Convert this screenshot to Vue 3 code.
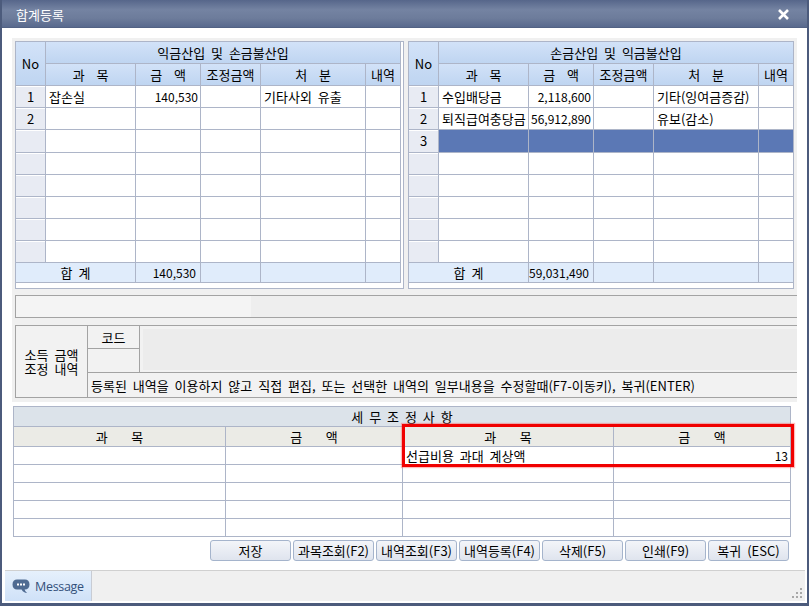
<template>
  <div class="window">
    <div class="titlebar">
      <span class="title-text">합계등록</span>
      <svg class="close" width="11" height="11" viewBox="0 0 11 11">
        <path d="M1 1L10 10M10 1L1 10" stroke="#fff" stroke-width="2.6" fill="none" />
      </svg>
    </div>

    <div class="panel">
      <div class="grids">
        <div v-for="(grid, g) in grids" :key="g" class="frame" :class="g === 0 ? 'frame-left' : 'frame-right'">
          <table class="grid">
            <colgroup>
              <col class="c-no" />
              <col class="c-name" />
              <col class="c-amt" />
              <col class="c-adj" />
              <col class="c-act" />
              <col />
            </colgroup>
            <thead>
              <tr>
                <th rowspan="2" class="no-head">No</th>
                <th colspan="5">{{ grid.title }}</th>
              </tr>
              <tr>
                <th v-for="h in gridHeads" :key="h">{{ h }}</th>
              </tr>
            </thead>
            <tbody>
              <tr v-for="(row, i) in grid.rows" :key="i" :class="{ selected: row.selected, tall: i === 2 }">
                <td class="row-no">{{ row.no }}</td>
                <td class="txt">{{ row.name }}</td>
                <td class="amt">{{ row.amount }}</td>
                <td></td>
                <td class="txt">{{ row.action }}</td>
                <td></td>
              </tr>
              <tr class="sum">
                <td colspan="2" class="sum-label">합 계</td>
                <td class="amt sum-amt">{{ grid.total }}</td>
                <td></td>
                <td></td>
                <td></td>
              </tr>
            </tbody>
          </table>
        </div>
      </div>

      <div class="status-bar"><div class="status-left"></div></div>

      <div class="adjust">
        <div class="adjust-label">소득 금액<br />조정 내역</div>
        <div class="code-head">코드</div>
        <div class="code-box-wrap"><div class="code-box"></div></div>
        <div class="code-empty"></div>
        <div class="note">등록된 내역을 이용하지 않고 직접 편집, 또는 선택한 내역의 일부내용을 수정할때(F7-이동키), 복귀(ENTER)</div>
      </div>
    </div>

    <div class="tax">
      <table class="tax-table">
        <colgroup>
          <col class="t-a" />
          <col class="t-b" />
          <col class="t-c" />
          <col />
        </colgroup>
        <thead>
          <tr>
            <th colspan="4" class="tax-title">세 무 조 정 사 항</th>
          </tr>
          <tr>
            <th v-for="(h, i) in taxHeads" :key="i">{{ h }}</th>
          </tr>
        </thead>
        <tbody>
          <tr v-for="(row, i) in taxRows" :key="i">
            <td></td>
            <td></td>
            <td class="tax-name">{{ row.name }}</td>
            <td class="tax-amt">{{ row.amount }}</td>
          </tr>
        </tbody>
      </table>
      <div class="highlight"></div>
    </div>

    <div class="buttons">
      <button v-for="b in buttons" :key="b" class="btn">{{ b }}</button>
    </div>

    <div class="footer">
      <div class="msg-tab">
        <svg width="18" height="15" viewBox="0 0 18 15">
          <path d="M5 0.5H13C15.6 0.5 17.5 2.2 17.5 5.5C17.5 8.8 15.6 10.5 13 10.5H12.6C13 12 14 13.2 15.2 14C12.8 14 10.6 12.6 9.6 10.5H5C2.4 10.5 0.5 8.8 0.5 5.5C0.5 2.2 2.4 0.5 5 0.5Z" fill="#4f6b92" />
          <rect x="5" y="4.5" width="2" height="2" fill="#fff" />
          <rect x="8" y="4.5" width="2" height="2" fill="#fff" />
          <rect x="11" y="4.5" width="2" height="2" fill="#fff" />
        </svg>
        <span class="msg-text">Message</span>
      </div>
      <svg class="grip" width="12" height="11" viewBox="0 0 12 11">
        <rect x="9" y="0" width="2" height="2" fill="#a8a8a8" />
        <rect x="5" y="4" width="2" height="2" fill="#a8a8a8" />
        <rect x="9" y="4" width="2" height="2" fill="#a8a8a8" />
        <rect x="1" y="8" width="2" height="2" fill="#a8a8a8" />
        <rect x="5" y="8" width="2" height="2" fill="#a8a8a8" />
        <rect x="9" y="8" width="2" height="2" fill="#a8a8a8" />
      </svg>
    </div>
  </div>
</template>

<script setup>
const blank = { no: '', name: '', amount: '', action: '' }

const gridHeads = ['과  목', '금  액', '조정금액', '처  분', '내역']
const taxHeads = ['과    목', '금    액', '과    목', '금    액']

const grids = [
  {
    title: '익금산입 및 손금불산입',
    total: '140,530',
    rows: [
      { no: '1', name: '잡손실', amount: '140,530', action: '기타사외 유출' },
      { no: '2', name: '', amount: '', action: '' },
      blank, blank, blank, blank, blank, blank
    ]
  },
  {
    title: '손금산입 및 익금불산입',
    total: '59,031,490',
    rows: [
      { no: '1', name: '수입배당금', amount: '2,118,600', action: '기타(잉여금증감)' },
      { no: '2', name: '퇴직급여충당금', amount: '56,912,890', action: '유보(감소)' },
      { no: '3', name: '', amount: '', action: '', selected: true },
      blank, blank, blank, blank, blank
    ]
  }
]

const taxRows = [
  { name: '선급비용 과대 계상액', amount: '13' },
  { name: '', amount: '' },
  { name: '', amount: '' },
  { name: '', amount: '' },
  { name: '', amount: '' }
]

const buttons = ['저장', '과목조회(F2)', '내역조회(F3)', '내역등록(F4)', '삭제(F5)', '인쇄(F9)', '복귀 (ESC)']
</script>

<style scoped>
.window {
  width: 809px;
  height: 606px;
  box-sizing: border-box;
  border-left: 2px solid #4c5b7c;
  border-right: 2px solid #4c5b7c;
  border-bottom: 3px solid #4c5b7c;
  background: #fff;
  display: flex;
  flex-direction: column;
  font-family: "Noto Sans CJK KR", sans-serif;
  font-size: 13px;
  color: #000;
  word-spacing: 3px;
  overflow: hidden;
}

.titlebar {
  height: 28px;
  flex: none;
  box-sizing: border-box;
  display: flex;
  align-items: center;
  justify-content: space-between;
  padding: 0 18px 0 14px;
  background: linear-gradient(#56668a 0, #7483a2 35%, #6d7c9b 65%, #596a8e 96%, #4c5b7c 100%);
}

.title-text {
  color: #fff;
}

.panel {
  flex: none;
  width: 785px;
  height: 364px;
  box-sizing: border-box;
  margin: 10px 0 0 10px;
  padding: 3px 0 0 3px;
  background: #f0f0f0;
}

.grids {
  display: flex;
  gap: 4px;
}

.frame {
  height: 248px;
  box-sizing: border-box;
  border: 1px solid #adb5c8;
  background: #fff;
}

.frame-left {
  width: 389px;
}

.frame-right {
  width: 386px;
}

.frame-left .grid {
  width: 385px;
}

.frame-right .grid {
  width: 384px;
}

.frame-right .grid td:last-child,
.frame-right .grid th:last-child {
  border-right: none;
}

.grid,
.tax-table {
  table-layout: fixed;
  border-collapse: separate;
  border-spacing: 0;
}

.c-no { width: 30px; }
.c-name { width: 90px; }
.c-amt { width: 65px; }
.c-adj { width: 60px; }
.c-act { width: 105px; }

.grid th,
.grid td {
  box-sizing: border-box;
  height: 22px;
  padding: 0;
  border-right: 1px solid #adb5c8;
  border-bottom: 1px solid #adb5c8;
  font-weight: 400;
  line-height: 16px;
  white-space: pre;
}

.grid th {
  background: linear-gradient(#d2e2f8, #bfd5f1);
  text-align: center;
}

.row-no {
  background: #e8ebf3;
  box-shadow: inset 0 1px 0 #fff;
  text-align: center;
}

.grid .txt {
  padding-left: 3px;
}

.grid .amt {
  padding-right: 2px;
  text-align: right;
  font-size: 12px;
  word-spacing: 0;
}

.grid .tall td {
  height: 23px;
}

.grid .selected td:not(.row-no) {
  background: #5b78b5;
}

.grid .sum td {
  height: 20px;
  background: #e0ecfb;
}

.sum-label {
  text-align: center;
}

.grid .sum-amt {
  padding-right: 4px;
}

.status-bar {
  height: 23px;
  box-sizing: border-box;
  margin-top: 6px;
  border: 1px solid #a3a3a3;
  border-right: none;
  background: #eeeeee;
}

.status-left {
  width: 235px;
  height: 100%;
  background: #f4f4f4;
}

.adjust {
  display: grid;
  grid-template-columns: 72px 52px 1fr;
  grid-template-rows: 23px 23px 25px;
  height: 73px;
  box-sizing: border-box;
  margin-top: 7px;
  border: 1px solid #a3a3a3;
  border-right: none;
  background: #f2f2f2;
}

.adjust-label {
  grid-column: 1;
  grid-row: 1 / 4;
  display: flex;
  align-items: center;
  justify-content: center;
  text-align: center;
  line-height: 14px;
  border-right: 1px solid #a3a3a3;
}

.code-head {
  grid-column: 2;
  grid-row: 1;
  display: flex;
  align-items: center;
  justify-content: center;
  border-right: 1px solid #a3a3a3;
  border-bottom: 1px solid #a3a3a3;
}

.code-box-wrap {
  grid-column: 3;
  grid-row: 1 / 3;
  padding: 3px 0 2px 3px;
}

.code-box {
  height: 100%;
  background: #ececec;
}

.code-empty {
  grid-column: 2;
  grid-row: 2;
  border-right: 1px solid #a3a3a3;
}

.note {
  grid-column: 2 / 4;
  grid-row: 3;
  display: flex;
  align-items: center;
  padding-left: 3px;
  border-top: 1px solid #a3a3a3;
  white-space: nowrap;
}

.tax {
  position: relative;
  flex: none;
  width: 778px;
  margin: 4px 0 0 11px;
}

.tax-table {
  width: 778px;
  border-top: 1px solid #adb5c8;
  border-left: 1px solid #adb5c8;
}

.t-a { width: 212px; }
.t-b { width: 177px; }
.t-c { width: 211px; }

.tax-table th,
.tax-table td {
  box-sizing: border-box;
  padding: 0;
  border-right: 1px solid #adb5c8;
  border-bottom: 1px solid #adb5c8;
  font-weight: 400;
  line-height: 16px;
  white-space: pre;
}

.tax-table th {
  height: 20px;
  background: #ebebe6;
  text-align: center;
}

.tax-table .tax-title {
  background: #dce3ea;
}

.tax-table td {
  height: 18px;
}

.tax-table .tax-name {
  padding-left: 3px;
}

.tax-table .tax-amt {
  padding-right: 2px;
  text-align: right;
  font-size: 12px;
}

.highlight {
  position: absolute;
  left: 389px;
  top: 18px;
  width: 392px;
  height: 43px;
  box-sizing: border-box;
  border: 3px solid #f00000;
  box-shadow: 0 0 1px 1px rgba(255, 60, 60, 0.35);
}

.buttons {
  flex: none;
  display: flex;
  justify-content: flex-end;
  gap: 2px;
  width: 787px;
  margin-top: 3px;
}

.btn {
  width: 81px;
  height: 21px;
  padding: 0;
  border: 1px solid #a5b4cc;
  border-radius: 3px;
  background: linear-gradient(#f3f5f9, #dfe4ee);
  font: inherit;
  color: #000;
  word-spacing: 3px;
}

.footer {
  flex: none;
  display: flex;
  justify-content: space-between;
  height: 31px;
  box-sizing: border-box;
  margin: 9px 2px 0 3px;
  border-top: 1px solid #d0d0d0;
  background: #f0f0f0;
}

.msg-tab {
  width: 87px;
  box-sizing: border-box;
  display: flex;
  align-items: center;
  gap: 5px;
  padding-left: 7px;
  border-right: 1px solid #c8ccd4;
  background: linear-gradient(#e6f0fc, #cfe1f8);
}

.msg-text {
  font-family: "Open Sans", sans-serif;
  font-size: 12.5px;
  letter-spacing: -0.3px;
  color: #33507a;
}

.grip {
  align-self: flex-end;
  margin: 0 2px 2px 0;
}
</style>

<style>
body {
  margin: 0;
  overflow: hidden;
}
</style>
